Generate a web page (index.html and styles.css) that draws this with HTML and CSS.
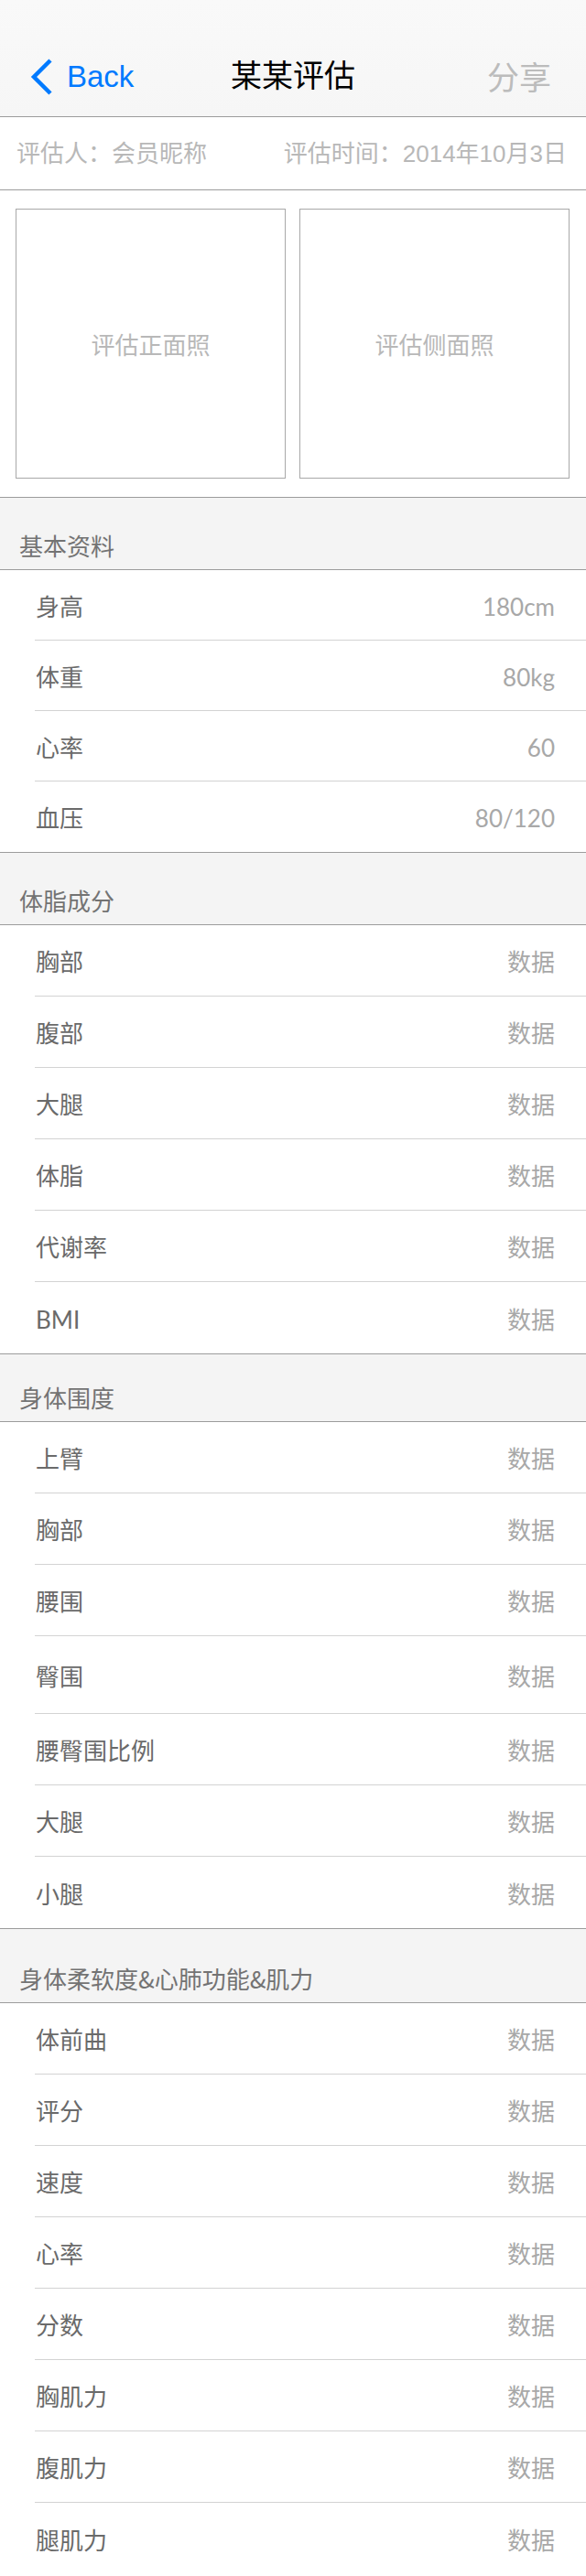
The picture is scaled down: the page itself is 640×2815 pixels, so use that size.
FILE: index.html
```html
<!DOCTYPE html>
<html lang="zh-CN">
<head>
<meta charset="utf-8">
<title>某某评估</title>
<link rel="stylesheet" href="styles.css">
</head>
<body>
<div class="page">
  <header class="nav">
    <div class="nav-left">
      <svg class="chev" width="26" height="40" viewBox="0 0 26 40"><path d="M23 2 L5 20 L23 38" fill="none" stroke="#007aff" stroke-width="4.5" stroke-linecap="butt" stroke-linejoin="miter"/></svg>
      <span class="back">Back</span>
    </div>
    <div class="nav-title">某某评估</div>
    <div class="nav-right">分享</div>
  </header>

  <div class="info">
    <span>评估人：会员昵称</span>
    <span>评估时间：2014年10月3日</span>
  </div>

  <div class="photos">
    <div class="photo">评估正面照</div>
    <div class="photo">评估侧面照</div>
  </div>

  <section class="sec sec--basic">
    <div class="sec-head">基本资料</div>
    <div class="row"><span class="lbl">身高</span><span class="val">180cm</span></div>
    <div class="row"><span class="lbl">体重</span><span class="val">80kg</span></div>
    <div class="row"><span class="lbl">心率</span><span class="val">60</span></div>
    <div class="row"><span class="lbl">血压</span><span class="val">80/120</span></div>
  </section>

  <section class="sec">
    <div class="sec-head">体脂成分</div>
    <div class="row"><span class="lbl">胸部</span><span class="val">数据</span></div>
    <div class="row"><span class="lbl">腹部</span><span class="val">数据</span></div>
    <div class="row"><span class="lbl">大腿</span><span class="val">数据</span></div>
    <div class="row"><span class="lbl">体脂</span><span class="val">数据</span></div>
    <div class="row"><span class="lbl">代谢率</span><span class="val">数据</span></div>
    <div class="row"><span class="lbl">BMI</span><span class="val">数据</span></div>
  </section>

  <section class="sec">
    <div class="sec-head sec-head--short">身体围度</div>
    <div class="row"><span class="lbl">上臂</span><span class="val">数据</span></div>
    <div class="row"><span class="lbl">胸部</span><span class="val">数据</span></div>
    <div class="row"><span class="lbl">腰围</span><span class="val">数据</span></div>
    <div class="row row--tall"><span class="lbl">臀围</span><span class="val">数据</span></div>
    <div class="row"><span class="lbl">腰臀围比例</span><span class="val">数据</span></div>
    <div class="row"><span class="lbl">大腿</span><span class="val">数据</span></div>
    <div class="row"><span class="lbl">小腿</span><span class="val">数据</span></div>
  </section>

  <section class="sec">
    <div class="sec-head sec-head--tall">身体柔软度&amp;心肺功能&amp;肌力</div>
    <div class="row"><span class="lbl">体前曲</span><span class="val">数据</span></div>
    <div class="row"><span class="lbl">评分</span><span class="val">数据</span></div>
    <div class="row"><span class="lbl">速度</span><span class="val">数据</span></div>
    <div class="row"><span class="lbl">心率</span><span class="val">数据</span></div>
    <div class="row"><span class="lbl">分数</span><span class="val">数据</span></div>
    <div class="row"><span class="lbl">胸肌力</span><span class="val">数据</span></div>
    <div class="row"><span class="lbl">腹肌力</span><span class="val">数据</span></div>
    <div class="row"><span class="lbl">腿肌力</span><span class="val">数据</span></div>
  </section>
</div>
</body>
</html>
```

FILE: styles.css
```css
* { box-sizing: border-box; }

html, body {
  margin: 0;
  padding: 0;
  background: #ffffff;
}

body {
  font-family: "Noto Sans CJK SC", "Liberation Sans", sans-serif;
  width: 640px;
}

.page {
  width: 640px;
}

/* navigation bar */
.nav {
  height: 128px;
  padding-top: 40px;
  background: linear-gradient(#f9f9f9, #f6f6f6);
  border-bottom: 1px solid #9c9c9c;
  display: grid;
  grid-template-columns: 1fr auto 1fr;
  align-items: center;
}

.nav-left {
  display: flex;
  align-items: center;
  padding-left: 32px;
  gap: 15px;
}

.chev {
  display: block;
  margin-top: 1px;
}

.back {
  font-family: "Liberation Sans", sans-serif;
  font-size: 33px;
  color: #007aff;
  line-height: 40px;
}

.nav-title {
  font-family: "Noto Sans CJK SC", sans-serif;
  font-size: 34px;
  color: #000;
  line-height: 40px;
  margin-top: -6px;
}

.nav-right {
  justify-self: end;
  padding-right: 38px;
  font-size: 35px;
  color: #bcbcbc;
  line-height: 40px;
  margin-top: -1px;
}

/* info row */
.info {
  height: 80px;
  border-bottom: 1px solid #9c9c9c;
  display: flex;
  align-items: center;
  justify-content: space-between;
  padding: 0 21px 0 18px;
  font-family: "Liberation Sans", "Noto Sans CJK SC", sans-serif;
  font-size: 26px;
  color: #b8b8b8;
  line-height: 30px;
}

/* photo placeholders */
.photos {
  display: flex;
  gap: 15px;
  padding: 20px 18px 20px 17px;
  height: 335px;
}

.photo {
  flex: 1;
  height: 295px;
  border: 1px solid #a8a8a8;
  display: flex;
  align-items: center;
  justify-content: center;
  font-size: 26px;
  color: #b8b8b8;
  line-height: 30px;
}

/* sections */
.sec-head {
  height: 80px;
  background: #f4f4f4;
  border-top: 1px solid #9c9c9c;
  border-bottom: 1px solid #9c9c9c;
  display: flex;
  align-items: flex-end;
  padding: 0 0 12px 21px;
  font-size: 26px;
  line-height: 28px;
  color: #737373;
}

.sec-head--short {
  height: 75px;
}

.sec-head--tall {
  height: 82px;
}

.row {
  height: 78px;
  margin-left: 38px;
  border-bottom: 1px solid #d3d3d3;
  display: flex;
  align-items: center;
  justify-content: space-between;
  padding: 3px 34px 0 1px;
}

.row:last-child {
  border-bottom: none;
}

.sec--basic .row {
  height: 77px;
}

.row--tall {
  height: 85px;
}

.lbl {
  font-family: "Lato", "Noto Sans CJK SC", sans-serif;
  font-size: 26px;
  line-height: 30px;
  color: #6a6a6a;
}

.val {
  font-family: "Lato", "Noto Sans CJK SC", sans-serif;
  font-size: 26px;
  line-height: 30px;
  color: #a8a8a8;
}
```
